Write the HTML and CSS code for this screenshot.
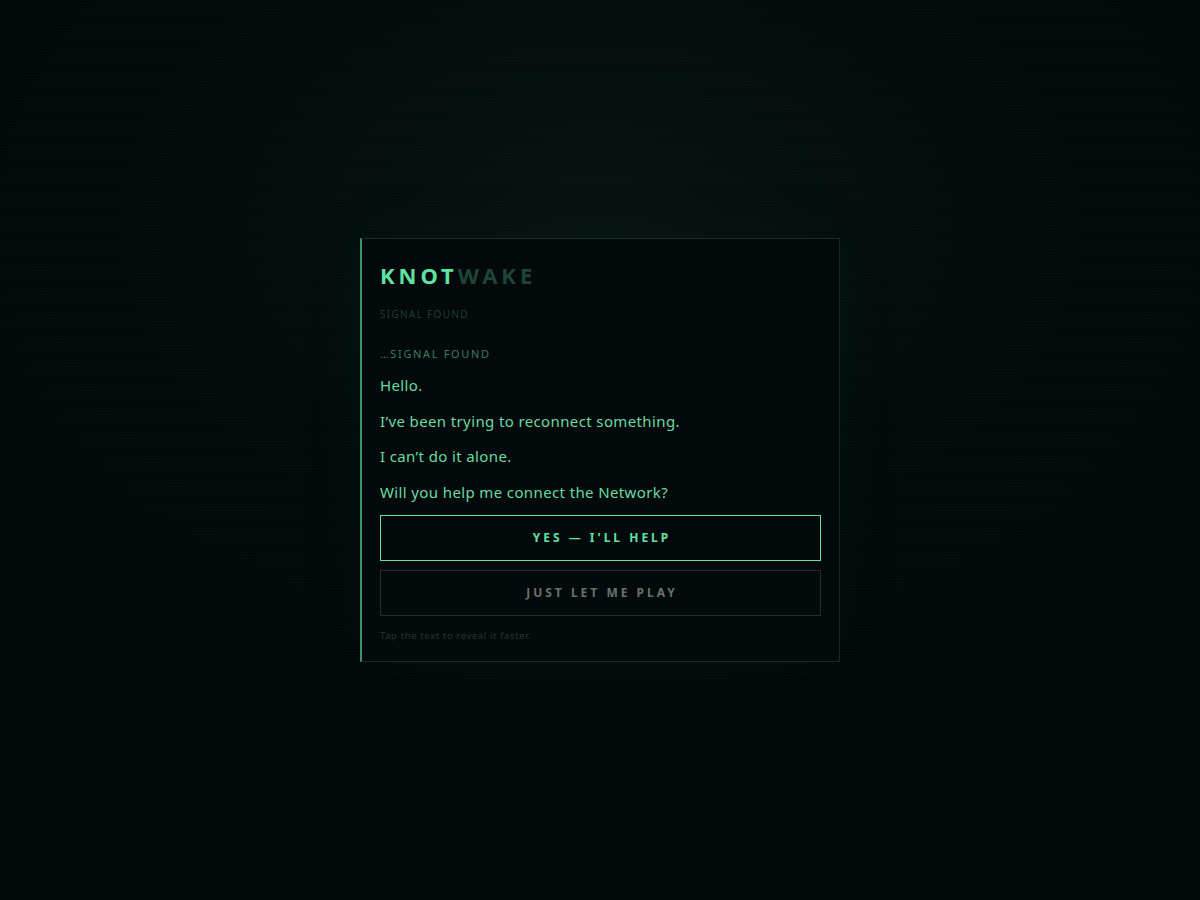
FILE: index.html
```html
<!DOCTYPE html>
<html lang="en">
<head>
<meta charset="utf-8">
<title>Knotwake</title>
<link rel="stylesheet" href="styles.css">
</head>
<body>
<main class="stage">
  <section class="card">
    <h1 class="logo"><span class="logo-a">KNOT</span><span class="logo-b">WAKE</span></h1>
    <div class="status">SIGNAL FOUND</div>
    <div class="signal">…SIGNAL FOUND</div>
    <div class="lines">
      <p class="line">Hello.</p>
      <p class="line">I’ve been trying to reconnect something.</p>
      <p class="line">I can’t do it alone.</p>
      <p class="line">Will you help me connect the Network?</p>
    </div>
    <div class="actions">
      <button class="btn btn-primary">YES — I'LL HELP</button>
      <button class="btn btn-secondary">JUST LET ME PLAY</button>
    </div>
    <div class="hint">Tap the text to reveal it faster.</div>
  </section>
</main>
</body>
</html>
```
FILE: styles.css
```css
html, body {
  margin: 0;
  padding: 0;
  height: 100%;
}
body {
  background-color: #03080a;
  background-image:
    repeating-linear-gradient(to bottom, rgba(255,255,255,0.010) 0px, rgba(255,255,255,0.010) 1px, transparent 1px, transparent 3px),
    radial-gradient(ellipse 700px 480px at 50% 25%, rgba(16,44,35,0.30) 0%, rgba(8,24,19,0.14) 55%, rgba(3,8,10,0) 100%);
  font-family: "Noto Sans", "Open Sans", sans-serif;
}
.stage {
  height: 100%;
  display: flex;
  align-items: center;
  justify-content: center;
}
.card {
  box-sizing: border-box;
  width: 480px;
  background: #04090b;
  border: 1px solid #1c2826;
  border-left: 2px solid #34976a;
  padding: 21px 18px 18px 18px;
  display: flex;
  flex-direction: column;
  box-shadow: 0 0 60px rgba(30, 90, 60, 0.08);
}
.logo {
  margin: 0;
  font-size: 22px;
  line-height: 30px;
  font-weight: 700;
  letter-spacing: 0.18em;
}
.logo-a { color: #5ee3a0; }
.logo-b { color: #1d4637; }
.status {
  margin-top: 17px;
  font-size: 10px;
  line-height: 14px;
  letter-spacing: 0.13em;
  color: #213c33;
}
.signal {
  margin-top: 25px;
  font-size: 11px;
  line-height: 16px;
  letter-spacing: 0.15em;
  color: #3e7c62;
}
.lines {
  margin-top: 12px;
  display: flex;
  flex-direction: column;
  gap: 13.5px;
}
.line {
  margin: 0;
  font-size: 15px;
  line-height: 22px;
  letter-spacing: 0.025em;
  color: #68dba0;
}
.actions {
  margin-top: 12px;
  display: flex;
  flex-direction: column;
  gap: 9px;
}
.btn {
  height: 46px;
  background: #04090b;
  font-family: "Noto Sans", "Open Sans", sans-serif;
  font-size: 12px;
  font-weight: 700;
  letter-spacing: 0.25em;
  padding: 0 0 0 0.25em;
  cursor: pointer;
}
.btn-primary {
  border: 1px solid #5ee3a0;
  color: #5ee3a0;
}
.btn-secondary {
  border: 1px solid #222c2b;
  color: #687370;
}
.hint {
  margin-top: 13px;
  font-size: 9.5px;
  line-height: 14px;
  letter-spacing: 0.065em;
  color: #1e3a30;
}
```
